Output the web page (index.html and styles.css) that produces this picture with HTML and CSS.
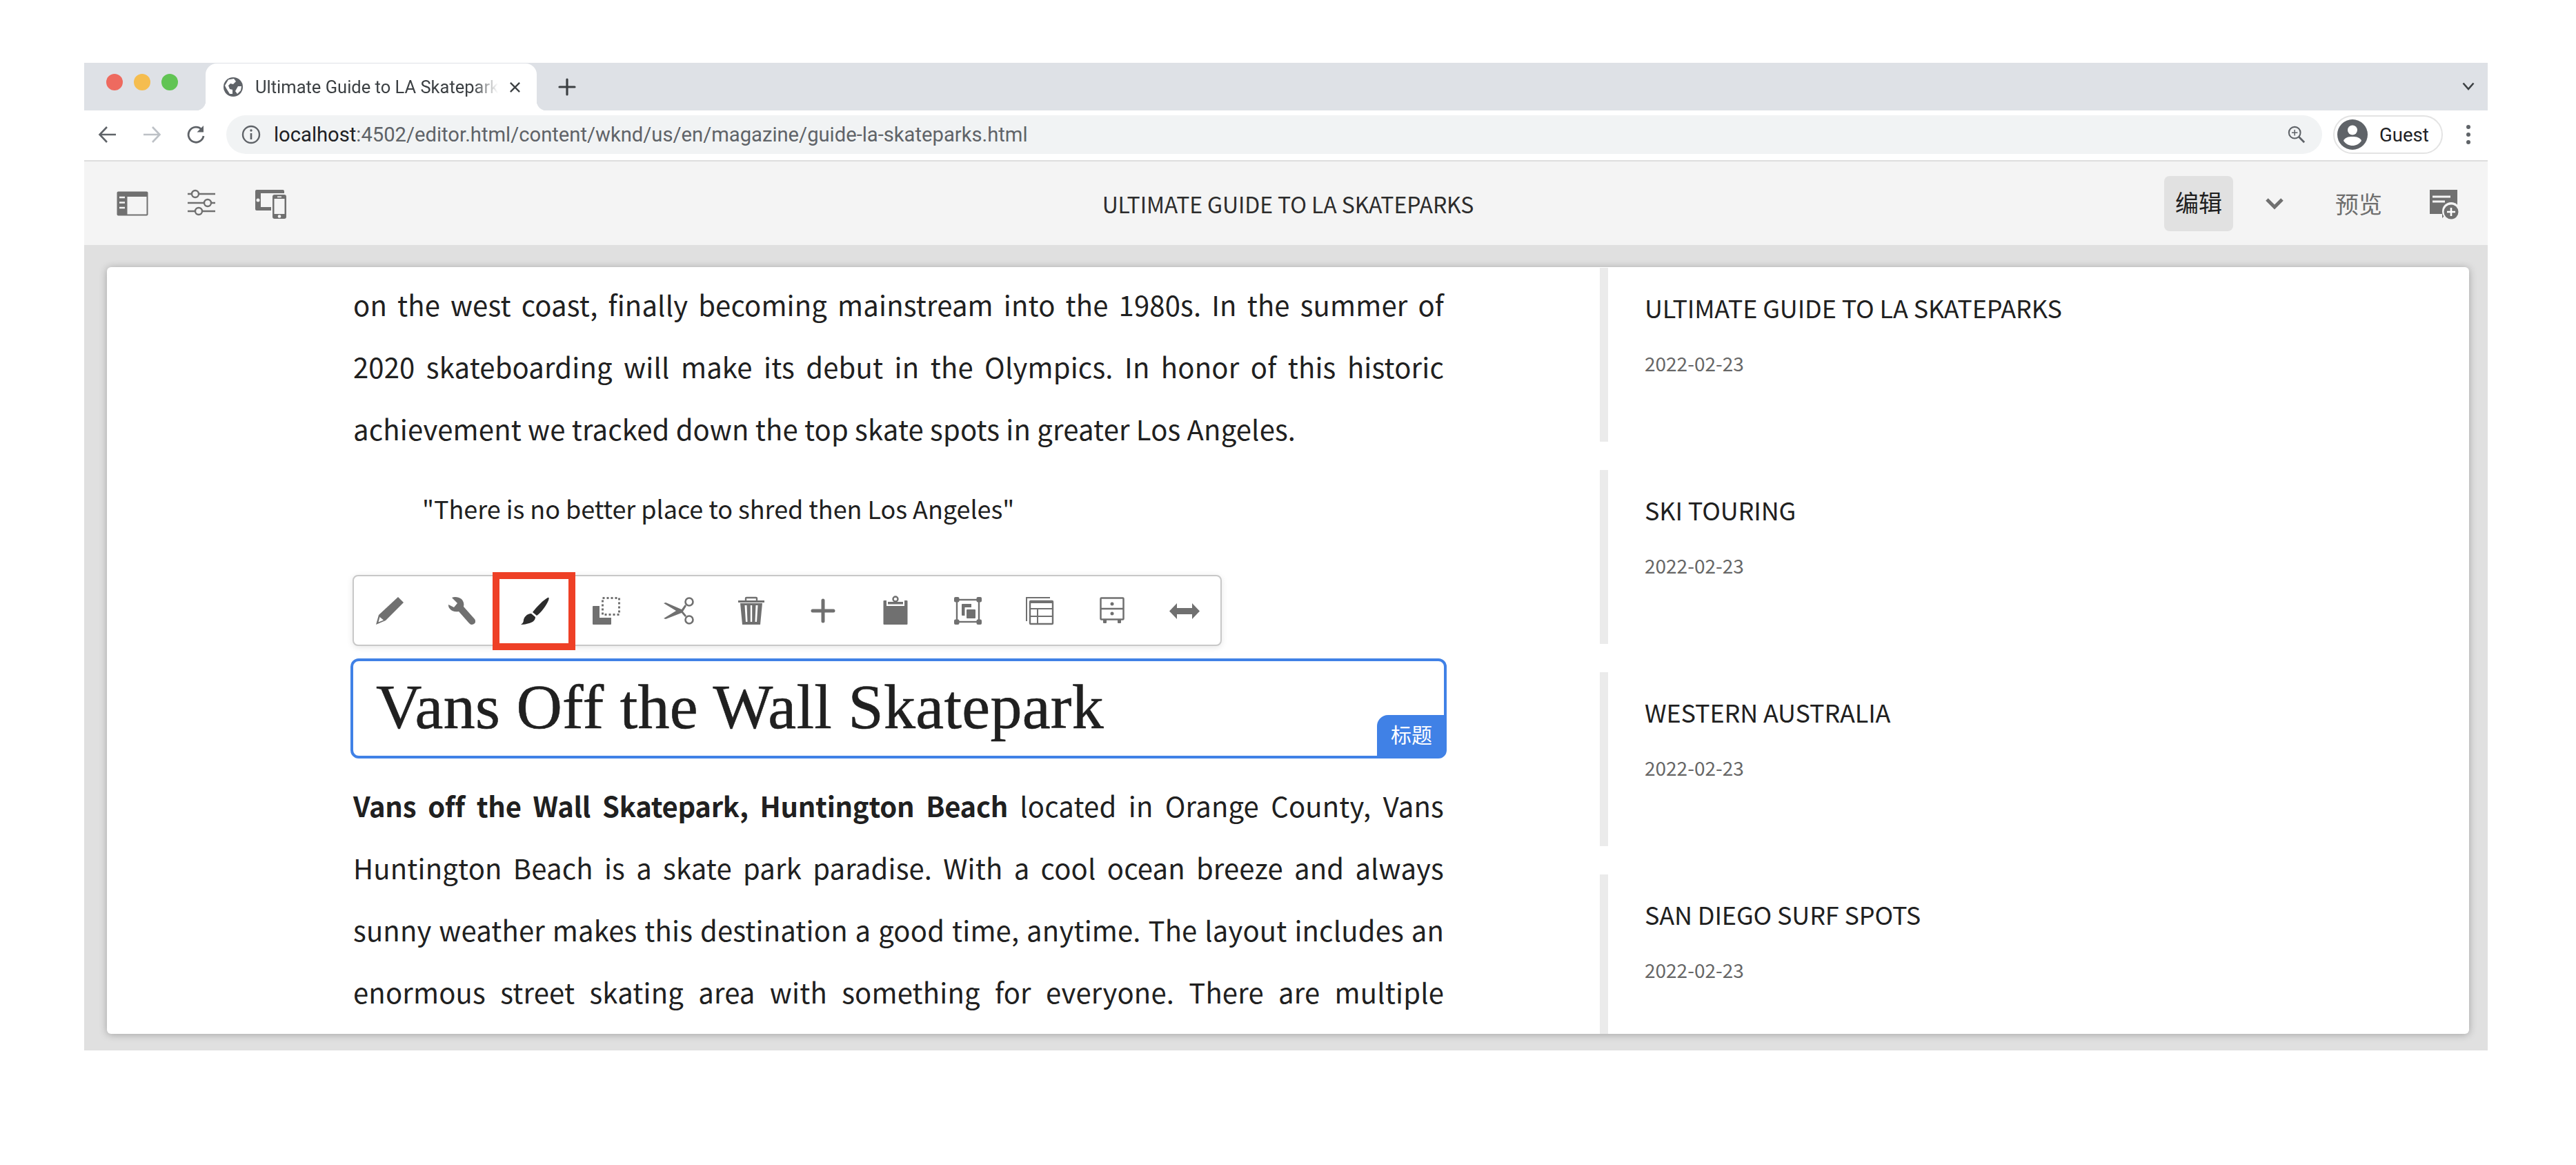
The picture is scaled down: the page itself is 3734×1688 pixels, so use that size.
FILE: index.html
```html
<!DOCTYPE html>
<html lang="en">
<head>
	<meta charset="UTF-8">
	<title>Ultimate Guide to LA Skateparks</title>
	<link rel="stylesheet" href="styles.css">
</head>
<body>
	<div class="window">
		<!-- tabs -->
		<div class="tabstrip">
			<div class="lights"><i class="red"></i><i class="yellow"></i><i class="green"></i></div>
			<div class="tab">
				<svg class="favicon" viewBox="0 0 28 28"><circle cx="14" cy="14" r="14" fill="#5f6368"/><path d="M7 3.5 L15 2 L18 6 L14 10 L10 9 L7 12 L9 17 L13 18 L13 24 L9 24 L4 16 L2 12 Z M21 13 L26 13 L25 19 L20 24 L17 20 Z" fill="#fff"/></svg>
				<span class="tabtitle">Ultimate Guide to LA Skatepark</span>
				<svg class="tabclose" viewBox="0 0 18 18"><path d="M2 2 L16 16 M16 2 L2 16" stroke="#3c4043" stroke-width="2.4"/></svg>
			</div>
			<svg class="newtab" viewBox="0 0 28 28"><path d="M14 3 V25 M3 14 H25" stroke="#3c4043" stroke-width="3.2" stroke-linecap="round"/></svg>
			<svg class="tabmenu" viewBox="0 0 18 12"><path d="M1.5 1.5 L9 10 L16.5 1.5" fill="none" stroke="#3c4043" stroke-width="2.6"/></svg>
		</div>

		<!-- address bar -->
		<div class="addressrow">
			<button class="navbtn"><svg viewBox="0 0 28 28"><path d="M26 14 H3 M13 3 L2.5 14 L13 25" fill="none" stroke="#5f6368" stroke-width="2.6"/></svg></button>
			<button class="navbtn"><svg viewBox="0 0 28 28"><path d="M2 14 H25 M15 3 L25.5 14 L15 25" fill="none" stroke="#bdc1c6" stroke-width="2.6"/></svg></button>
			<button class="navbtn"><svg viewBox="0 0 28 28"><path d="M22.5 7 A11 11 0 1 0 25 16" fill="none" stroke="#5f6368" stroke-width="2.8"/><path d="M25 1 V10.5 H15.5 Z" fill="#5f6368"/></svg></button>
			<div class="omnibox">
				<svg class="infoicon" viewBox="0 0 28 28"><circle cx="14" cy="14" r="12" fill="none" stroke="#5f6368" stroke-width="2.4"/><path d="M14 12 V21" stroke="#5f6368" stroke-width="2.6"/><circle cx="14" cy="8" r="1.7" fill="#5f6368"/></svg>
				<span class="url"><b>localhost</b>:4502/editor.html/content/wknd/us/en/magazine/guide-la-skateparks.html</span>
				<svg class="zoomicon" viewBox="0 0 28 28"><circle cx="11" cy="11" r="9" fill="none" stroke="#5f6368" stroke-width="2.2"/><path d="M11 6.5 V15.5 M6.5 11 H15.5" stroke="#5f6368" stroke-width="1.6"/><path d="M17.5 17.5 L26 26" stroke="#5f6368" stroke-width="3"/></svg>
			</div>
			<div class="guest">
				<svg class="avatar" viewBox="0 0 44 44"><circle cx="22" cy="22" r="22" fill="#5f6368"/><circle cx="22" cy="15.5" r="7" fill="#fff"/><path d="M9 31 C11 26 16 25 22 25 C28 25 33 26 35 31 C32 35.5 27 38 22 38 C17 38 12 35.5 9 31 Z" fill="#fff"/></svg>
				<span>Guest</span>
			</div>
			<div class="dots"><i></i><i></i><i></i></div>
		</div>

		<!-- editor toolbar -->
		<div class="editorbar">
			<div class="barleft">
				<button class="barbtn"><svg viewBox="0 0 46 46"><rect x="0.5" y="5.5" width="45" height="35" rx="2" fill="#707070"/><rect x="15.5" y="13" width="28" height="25.5" fill="#f4f4f4"/><path d="M4 14 H12 M4 21.500 H12 M4 29 H12" stroke="#f4f4f4" stroke-width="2.6"/></svg></button>
				<button class="barbtn"><svg viewBox="0 0 46 46"><path d="M3 9 H43 M3 22 H43 M3 34 H43" stroke="#707070" stroke-width="2.4"/><g fill="#f4f4f4" stroke="#707070" stroke-width="2.4"><circle cx="14" cy="9" r="5"/><circle cx="32" cy="22" r="5"/><circle cx="19" cy="34" r="5"/></g></svg></button>
				<button class="barbtn"><svg viewBox="0 0 46 46"><path d="M3 3 H41 Q43 3 43 5 V8 H9 V28 H24 V33 H3 Q1 33 1 31 V5 Q1 3 3 3 Z" fill="#707070"/><circle cx="5" cy="18" r="2.5" fill="#f4f4f4"/><rect x="26" y="10" width="20" height="35" rx="3" fill="#707070"/><rect x="28.500" y="16" width="15" height="22" fill="#f4f4f4"/><rect x="33" y="12.500" width="6" height="1.600" fill="#f4f4f4"/><circle cx="36" cy="41.500" r="2.300" fill="#f4f4f4"/></svg></button>
			</div>
			<div class="pagetitle">ULTIMATE GUIDE TO LA SKATEPARKS</div>
			<div class="barright">
				<div class="editbtn">编辑</div>
				<svg class="modechevron" viewBox="0 0 26 16"><path d="M2 2 L13 13 L24 2" fill="none" stroke="#707070" stroke-width="5"/></svg>
				<div class="previewbtn">预览</div>
				<svg class="noteicon" viewBox="0 0 46 46"><path d="M2 3 H42 V38 H26 L20 44 V38 H2 Z" fill="#707070"/><path d="M6 13 H32 M6 20 H24" stroke="#f4f4f4" stroke-width="3"/><circle cx="33" cy="34" r="13" fill="#f4f4f4"/><circle cx="33" cy="35" r="10.500" fill="#707070"/><path d="M33 29 V41 M27 35 H39" stroke="#fff" stroke-width="2.600"/></svg>
			</div>
		</div>

		<!-- page -->
		<div class="canvas">
			<div class="card">
				<div class="article">
					<p class="para">on the west coast, finally becoming mainstream into the 1980s. In the summer of 2020 skateboarding will make its debut in the Olympics. In honor of this historic achievement we tracked down the top skate spots in greater Los Angeles.</p>
					<p class="quote">"There is no better place to shred then Los Angeles"</p>
					<div class="toolbar">
						<button class="tool"><svg viewBox="0 0 40 40"><path d="M32 0 L40 8 L14 34 L0 40 L4 26 Z" fill="#707070"/><path d="M5.500 29 L3.500 36.500 L11 33.500 Z" fill="#fff"/></svg></button>
						<button class="tool"><svg viewBox="0 0 40 40"><path d="M5 1 C9 -1 15 0 19 3 C22 6 23 10 22 14 L38 32 C40 35 39 38 37 39 C34 41 32 40 30 38 L15 21 C10 22 5 21 2 17 C0 15 0 13 0 11 L8 15 L13 9 Z" fill="#707070"/></svg></button>
						<button class="tool tool-active"><svg viewBox="0 0 40 40"><path d="M39 1 C41 0 41 2 40 5 C37 12 30 22 23 27 L17 22 C23 14 33 4 39 1 Z" fill="#2c2c2c"/><path d="M15 24 L21 29 C21 36 14 39 0 40 C3 38 4 36 4 33 C5 28 10 24 15 24 Z" fill="#2c2c2c"/></svg><span class="marker"></span></button>
						<button class="tool"><svg viewBox="0 0 40 40"><path d="M0 14 Q0 13 1 13 H10 V30 H27 V39 Q27 40 26 40 H1 Q0 40 0 39 Z" fill="#707070"/><rect x="14.500" y="1.500" width="24" height="24" fill="none" stroke="#707070" stroke-width="3" stroke-dasharray="3 3"/></svg></button>
						<button class="tool"><svg class="wide" viewBox="0 0 44 40"><path d="M0 9 L3 8 L26 18 L31 11 L33 13 L28 21 L33 27 L31 29 L26 23 L3 32 L0 31 L18 20 Z" fill="#707070"/><g fill="#fff" stroke="#707070" stroke-width="2.600"><circle cx="37" cy="7" r="5.500"/><circle cx="37" cy="33" r="5.500"/></g></svg></button>
						<button class="tool"><svg viewBox="0 0 40 40"><path d="M12 5 V2 Q12 1 13 1 H27 Q28 1 28 2 V5" fill="none" stroke="#707070" stroke-width="2.400"/><rect x="1" y="5" width="38" height="3" fill="#707070"/><path d="M4 9 H36 L33 40 H7 Z" fill="#707070"/><path d="M10.500 12 H13.500 L14.500 36 H12 Z M26.500 12 H29.500 L28 36 H25.500 Z M18.800 12 H21.200 V36 H18.800 Z" fill="#fff"/></svg></button>
						<button class="tool"><svg viewBox="0 0 40 40"><path d="M20 5 V35 M5 20 H35" stroke="#707070" stroke-width="5" stroke-linecap="round"/></svg></button>
						<button class="tool"><svg viewBox="0 0 40 40"><rect x="2.500" y="5" width="35" height="35" rx="1" fill="#707070"/><rect x="7" y="5" width="26" height="8" fill="#fff"/><rect x="9" y="7" width="22" height="3.500" fill="#707070"/><circle cx="20" cy="3" r="3.500" fill="none" stroke="#707070" stroke-width="2.400"/></svg></button>
						<button class="tool"><svg viewBox="0 0 40 40"><rect x="4" y="4" width="32" height="32" fill="none" stroke="#707070" stroke-width="2.400"/><g fill="#707070"><rect x="0" y="0" width="7.500" height="7.500" rx="2"/><rect x="32.500" y="0" width="7.500" height="7.500" rx="2"/><rect x="0" y="32.500" width="7.500" height="7.500" rx="2"/><rect x="32.500" y="32.500" width="7.500" height="7.500" rx="2"/><path d="M11 11 Q11 10 12 10 H25 V15 H15.500 V27 H12 Q11 27 11 26 Z"/><rect x="18" y="18" width="13" height="13" rx="1"/></g></svg></button>
						<button class="tool"><svg viewBox="0 0 40 40"><path d="M35 1 H1 V35" fill="none" stroke="#707070" stroke-width="2"/><rect x="6" y="6" width="33" height="33" rx="1" fill="none" stroke="#707070" stroke-width="2.400"/><path d="M6 7.500 H39" stroke="#707070" stroke-width="3"/><path d="M6 17 H39 M6 28 H39 M17 17 V39" stroke="#707070" stroke-width="2"/></svg></button>
						<button class="tool"><svg viewBox="0 0 40 40"><rect x="3.500" y="1.500" width="33" height="31" rx="1" fill="none" stroke="#707070" stroke-width="2.500"/><path d="M3.500 17 H36.500" stroke="#707070" stroke-width="2.400"/><circle cx="20" cy="10" r="2.500" fill="#707070"/><circle cx="20" cy="24" r="2.500" fill="#707070"/><path d="M7 33 H12 V37 Q12 38 11 38 H8 Q7 38 7 37 Z M28 33 H33 V37 Q33 38 32 38 H29 Q28 38 28 37 Z" fill="#707070"/></svg></button>
						<button class="tool"><svg class="wide" viewBox="0 0 44 40"><path d="M0 20.500 L11 9 V16 H33 V9 L44 20.500 L33 32 V25 H11 V32 Z" fill="#707070"/></svg></button>
					</div>
					<div class="titlebox">
						<h1>Vans Off the Wall Skatepark</h1>
						<span class="badge">标题</span>
					</div>
					<p class="para para-cut"><b>Vans off the Wall Skatepark, Huntington Beach</b> located in Orange County, Vans Huntington Beach is a skate park paradise. With a cool ocean breeze and always sunny weather makes this destination a good time, anytime. The layout includes an enormous street skating area with something for everyone. There are multiple</p>
				</div>
				<div class="sidelist">
					<div class="sideitem"><div class="sidetitle">ULTIMATE GUIDE TO LA SKATEPARKS</div><div class="sidedate">2022-02-23</div></div>
					<div class="sideitem"><div class="sidetitle">SKI TOURING</div><div class="sidedate">2022-02-23</div></div>
					<div class="sideitem"><div class="sidetitle">WESTERN AUSTRALIA</div><div class="sidedate">2022-02-23</div></div>
					<div class="sideitem"><div class="sidetitle">SAN DIEGO SURF SPOTS</div><div class="sidedate">2022-02-23</div></div>
				</div>
			</div>
		</div>
	</div>
</body>
</html>
```

FILE: styles.css
```css
*{
	margin:0;
	padding:0;
	box-sizing:border-box;
}
body{
	background:#fff;
	padding:91px 128px 0 122px;
	font-family:"Noto Sans CJK SC","Noto Sans",sans-serif;
	color:#202020;
}
button{
	border:0;
	background:none;
	display:flex;
	align-items:center;
	justify-content:center;
}
svg{
	display:block;
	overflow:visible;
}
.window{
	height:1431px;
	display:flex;
	flex-direction:column;
}

/* tabs */
.tabstrip{
	flex:none;
	height:69px;
	background:#dee1e6;
	display:flex;
	align-items:flex-end;
}
.lights{
	display:flex;
	gap:16px;
	margin:0 40px 0 32px;
	align-self:flex-start;
	padding-top:16px;
}
.lights i{
	width:24px;
	height:24px;
	border-radius:50%;
}
.red{background:#ee6a5f;}
.yellow{background:#f5bd4f;}
.green{background:#61c454;}
.tab{
	width:480px;
	height:68px;
	background:#fff;
	border-radius:16px 16px 0 0;
	display:flex;
	align-items:center;
	padding:0 23px 0 26px;
	position:relative;
}
.tab::before,.tab::after{
	content:"";
	position:absolute;
	bottom:0;
	width:14px;
	height:14px;
}
.tab::before{
	left:-14px;
	background:radial-gradient(circle at 0 0,#dee1e6 14px,#fff 14.5px);
}
.tab::after{
	right:-14px;
	background:radial-gradient(circle at 100% 0,#dee1e6 14px,#fff 14.5px);
}
.favicon{
	width:28px;
	height:28px;
	flex:none;
}
.tabtitle{
	margin-left:18px;
	width:352px;
	flex:none;
	overflow:hidden;
	white-space:nowrap;
	font:25.500px Roboto,sans-serif;
	color:#3c4043;
	-webkit-mask-image:linear-gradient(to right,#000 90%,transparent);
	mask-image:linear-gradient(to right,#000 90%,transparent);
}
.tabclose{
	width:17px;
	height:17px;
	margin-left:auto;
}
.newtab{
	width:28px;
	height:28px;
	margin:0 0 20px 30px;
}
.tabmenu{
	width:18px;
	height:12px;
	margin:0 19px 29px auto;
}

/* address bar */
.addressrow{
	flex:none;
	height:74px;
	background:#fff;
	border-bottom:2px solid #dedede;
	display:flex;
	align-items:center;
	padding:0 7px 2px 2px;
}
.navbtn{
	width:64px;
	height:56px;
}
.navbtn svg{
	width:28px;
	height:28px;
}
.omnibox{
	flex:1;
	height:56px;
	margin-left:12px;
	background:#f1f3f4;
	border-radius:28px;
	display:flex;
	align-items:center;
	padding:0 24px 0 22px;
}
.infoicon{
	width:28px;
	height:28px;
}
.url{
	margin-left:19px;
	font:29.200px Roboto,sans-serif;
	color:#5f6368;
}
.url b{
	font-weight:normal;
	color:#202124;
}
.zoomicon{
	width:26px;
	height:26px;
	margin-left:auto;
}
.guest{
	width:159px;
	height:56px;
	margin-left:16px;
	border:2px solid #e3e3e3;
	border-radius:28px;
	display:flex;
	align-items:center;
	padding-left:4px;
	font:27.500px Roboto,sans-serif;
	color:#202124;
}
.avatar{
	width:44px;
	height:44px;
	margin-right:17px;
}
.dots{
	width:42px;
	margin-left:16px;
	display:flex;
	flex-direction:column;
	align-items:center;
	gap:5px;
}
.dots i{
	width:6px;
	height:6px;
	border-radius:50%;
	background:#5f6368;
}

/* editor toolbar */
.editorbar{
	flex:none;
	height:121px;
	background:#f4f4f4;
	display:grid;
	grid-template-columns:1fr auto 1fr;
	align-items:center;
	padding:0 14px 0 20px;
}
.barleft{
	display:flex;
}
.barbtn{
	width:100px;
	height:80px;
}
.barbtn svg{
	width:46px;
	height:46px;
}
.pagetitle{
	font-size:32px;
	line-height:36px;
	letter-spacing:-.1px;
	color:#2c2c2c;
}
.barright{
	display:flex;
	align-items:center;
	justify-content:flex-end;
}
.editbtn{
	width:100px;
	height:80px;
	background:#e1e1e1;
	border-radius:8px;
	font-size:34px;
	line-height:76px;
	text-align:center;
	color:#202020;
}
.modechevron{
	width:26px;
	height:16px;
	margin:0 75px 0 47px;
}
.previewbtn{
	font-size:34px;
	line-height:36px;
	color:#6e6e6e;
}
.noteicon{
	width:46px;
	height:46px;
	margin:0 26px 0 67px;
}

/* page */
.canvas{
	flex:1 1 0;
	min-height:0;
	background:#e0e0e0;
	padding:32px 27px 24px 33px;
}
.card{
	height:100%;
	background:#fff;
	border-radius:6px;
	box-shadow:0 1px 12px rgba(0,0,0,.28);
	display:flex;
	overflow:hidden;
}
.article{
	width:2164px;
	flex:none;
	padding:9px 0 0 357px;
}
.para{
	width:1581px;
	font-size:40px;
	line-height:90px;
	letter-spacing:.17px;
	text-align:justify;
	color:#202020;
}
.para b{
	letter-spacing:-.3px;
}
.para-cut{
	margin-top:23px;
	text-align-last:justify;
}
.quote{
	margin:25px 0 0 100px;
	font-size:36px;
	line-height:90px;
	letter-spacing:-.05px;
}

/* component toolbar, sits over the article in the real editor */
.toolbar{
	width:1260px;
	height:103px;
	margin:52px 0 0 -1px;
	background:#fff;
	border:2px solid #c8c8c8;
	border-radius:8px;
	box-shadow:0 2px 10px rgba(0,0,0,.1);
	display:flex;
}
.tool{
	flex:1;
	position:relative;
}
.tool svg{
	width:40px;
	height:40px;
}
.tool svg.wide{
	width:44px;
}
.marker{
	position:absolute;
	left:-8px;
	top:-6px;
	width:120px;
	height:113px;
	border:10px solid #ee4026;
}
.titlebox{
	width:1589px;
	height:145px;
	margin:18px 0 0 -4px;
	border:4px solid #4081e6;
	border-radius:12px;
	padding-left:33px;
	position:relative;
}
.titlebox h1{
	font:normal 92px/133px "Liberation Serif",serif;
	letter-spacing:.3px;
	-webkit-text-stroke:.6px #202020;
	color:#202020;
}
.badge{
	position:absolute;
	right:0;
	bottom:0;
	width:97px;
	height:59px;
	background:#4081e6;
	border-radius:16px 0 0 0;
	color:#fff;
	font-size:30px;
	line-height:55px;
	text-align:center;
	padding-left:3px;
}

/* side list */
.sidelist{
	flex:1;
	padding-top:1px;
}
.sideitem{
	height:252px;
	margin-bottom:41px;
	border-left:12px solid #ebebeb;
	padding:34px 0 0 53px;
}
.sidetitle{
	font-size:36px;
	line-height:46px;
	letter-spacing:-.15px;
	color:#202020;
}
.sidedate{
	margin-top:38px;
	font-size:28px;
	line-height:40px;
	color:#666;
}
```
